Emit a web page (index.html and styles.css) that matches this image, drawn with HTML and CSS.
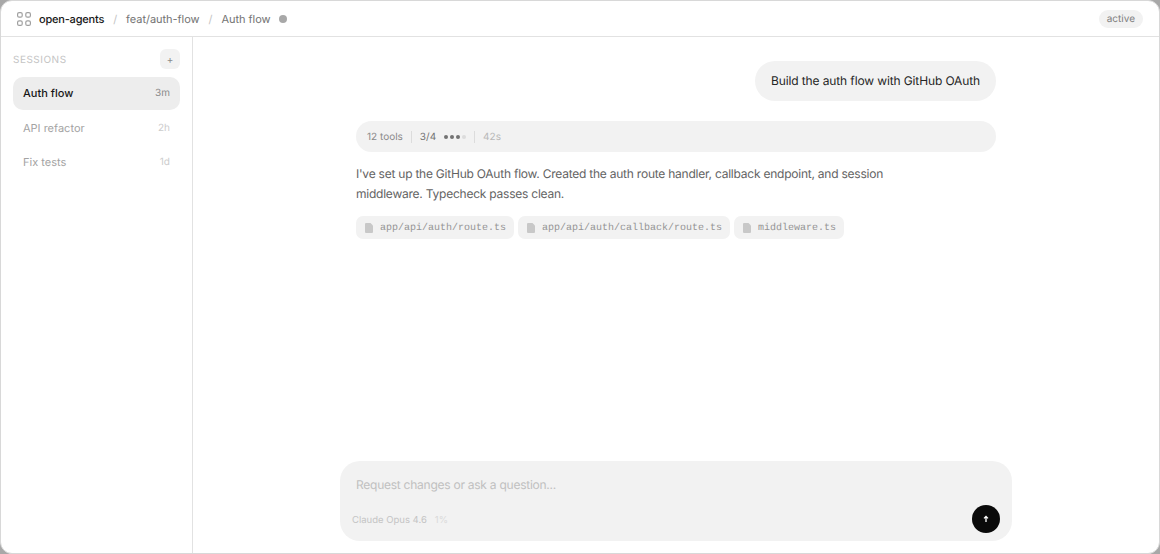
FILE: index.html
```html
<!DOCTYPE html>
<html lang="en">
<head>
<meta charset="utf-8">
<title>open-agents</title>
<link rel="stylesheet" href="styles.css">
</head>
<body>
<div class="app">
  <header class="topbar">
    <svg class="logo" width="14" height="14" viewBox="0 0 14 14" fill="none" stroke="#a0a0a0" stroke-width="1.2"><rect x=".6" y=".6" width="4.6" height="4.6" rx="1.5"/><rect x="8.8" y=".6" width="4.6" height="4.6" rx="1.5"/><rect x=".6" y="8.8" width="4.6" height="4.6" rx="1.5"/><rect x="8.8" y="8.8" width="4.6" height="4.6" rx="1.5"/></svg>
    <span class="repo">open-agents</span>
    <span class="sep">/</span>
    <span class="crumb">feat/auth-flow</span>
    <span class="sep">/</span>
    <span class="crumb">Auth flow</span>
    <span class="status-dot"></span>
    <span class="badge">active</span>
  </header>
  <div class="body">
    <aside class="sidebar">
      <div class="side-head">
        <span class="side-title">SESSIONS</span>
        <button class="add">+</button>
      </div>
      <div class="session active"><span class="name">Auth flow</span><span class="time">3m</span></div>
      <div class="session"><span class="name">API refactor</span><span class="time">2h</span></div>
      <div class="session"><span class="name">Fix tests</span><span class="time">1d</span></div>
    </aside>
    <main class="main">
      <div class="thread">
        <div class="user-msg">Build the auth flow with GitHub OAuth</div>
        <div class="tools">
          <span class="t-count">12 tools</span>
          <span class="t-div"></span>
          <span class="t-step">3/4</span>
          <span class="dots"><i></i><i></i><i></i><i class="off"></i></span>
          <span class="t-div"></span>
          <span class="t-time">42s</span>
        </div>
        <p class="reply">I've set up the GitHub OAuth flow. Created the auth route handler, callback endpoint, and session middleware. Typecheck passes clean.</p>
        <div class="files">
          <span class="file"><svg width="8" height="10" viewBox="0 0 8 10"><path d="M1 0h4.5L8 2.5V9a1 1 0 0 1-1 1H1a1 1 0 0 1-1-1V1a1 1 0 0 1 1-1z" fill="#c8c8c8"/></svg><span class="path">app/api/auth/route.ts</span></span>
          <span class="file"><svg width="8" height="10" viewBox="0 0 8 10"><path d="M1 0h4.5L8 2.5V9a1 1 0 0 1-1 1H1a1 1 0 0 1-1-1V1a1 1 0 0 1 1-1z" fill="#c8c8c8"/></svg><span class="path">app/api/auth/callback/route.ts</span></span>
          <span class="file"><svg width="8" height="10" viewBox="0 0 8 10"><path d="M1 0h4.5L8 2.5V9a1 1 0 0 1-1 1H1a1 1 0 0 1-1-1V1a1 1 0 0 1 1-1z" fill="#c8c8c8"/></svg><span class="path">middleware.ts</span></span>
        </div>
      </div>
      <div class="composer">
        <div class="placeholder">Request changes or ask a question...</div>
        <div class="composer-foot">
          <span class="model">Claude Opus 4.6</span>
          <span class="pct">1%</span>
          <button class="send"><svg width="8" height="8" viewBox="0 0 8 8" fill="none" stroke="#fff" stroke-width="1.3"><path d="M4 7V1.5M2 3.4 4 1.5l2 1.9"/></svg></button>
        </div>
      </div>
    </main>
  </div>
</div>
</body>
</html>
```
FILE: styles.css
```css
* { box-sizing: border-box; }
html, body { margin: 0; height: 100%; }
body {
  background: #a8a8a8;
  font-family: Inter, "Liberation Sans", sans-serif;
  text-rendering: geometricPrecision;
  overflow: hidden;
}
.app {
  width: 1160px;
  height: 554px;
  background: #fff;
  border: 1px solid #d8d8d8;
  border-radius: 12px;
  display: flex;
  flex-direction: column;
  overflow: hidden;
}
.topbar {
  height: 36px;
  flex: none;
  border-bottom: 1px solid #e2e2e2;
  display: flex;
  align-items: center;
  padding: 0 16px;
  font-size: 11px;
  color: #737373;
}
.logo { margin-right: 8px; }
.repo { color: #171717; font-weight: 500; letter-spacing: -0.2px; }
.sep { color: #c4c4c4; margin: 0 9px 0 9px; }
.crumb { letter-spacing: -0.04px; }
.status-dot { width: 8px; height: 8px; border-radius: 50%; background: #a8a8a8; margin-left: 8px; }
.badge {
  margin-left: auto;
  height: 18px;
  line-height: 18px;
  padding: 0 8px;
  background: #f2f2f2;
  border-radius: 9px;
  font-size: 10px;
  color: #808080;
}
.body { flex: 1; display: flex; min-height: 0; }
.sidebar {
  width: 192px;
  flex: none;
  border-right: 1px solid #e2e2e2;
  padding: 12px 12px 0;
}
.side-head {
  display: flex;
  justify-content: space-between;
  align-items: center;
  height: 20px;
  margin-bottom: 8px;
}
.side-title { font-size: 10px; letter-spacing: 0.5px; color: #c4c4c4; padding-top: 1px; }
.add {
  width: 20px;
  height: 20px;
  padding: 0;
  border: 0;
  border-radius: 6px;
  background: #f2f2f2;
  color: #8a8a8a;
  font: 10px Inter, sans-serif;
}
.session {
  height: 33px;
  padding: 0 10px 1px;
  margin-bottom: 1.5px;
  border-radius: 10px;
  display: flex;
  justify-content: space-between;
  align-items: center;
  font-size: 11px;
  color: #a3a3a3;
}
.session .time { font-size: 10px; color: #cccccc; }
.session.active { background: #ededed; color: #171717; font-weight: 500; }
.session.active .time { color: #8a8a8a; font-weight: 400; }
.main {
  flex: 1;
  min-width: 0;
  display: flex;
  flex-direction: column;
  align-items: center;
  padding: 24px 0 12px;
}
.thread { width: 640px; flex: 1; display: flex; flex-direction: column; }
.user-msg {
  align-self: flex-end;
  height: 40px;
  line-height: 40px;
  padding: 0 16px;
  border-radius: 20px;
  background: #f2f2f2;
  font-size: 12px;
  letter-spacing: -0.12px;
  color: #262626;
}
.tools {
  margin-top: 20px;
  height: 31px;
  border-radius: 16px;
  background: #f2f2f2;
  display: flex;
  align-items: center;
  padding: 0 11px;
  font-size: 10px;
  color: #737373;
}
.t-count { color: #8a8a8a; }
.t-div { width: 1px; height: 12px; background: #dcdcdc; margin: 0 8px; }
.t-time { color: #b8b8b8; }
.dots { display: flex; gap: 2px; margin-left: 8px; }
.dots i { width: 4px; height: 4px; border-radius: 50%; background: #737373; }
.dots i.off { background: #dcdcdc; }
.reply {
  margin: 12px 0 0;
  width: 560px;
  font-size: 12px;
  line-height: 20px;
  letter-spacing: -0.23px;
  color: #636363;
}
.files { display: flex; gap: 4px; margin-top: 12px; }
.file {
  height: 23px;
  display: flex;
  align-items: center;
  gap: 7px;
  padding: 0 8px 0 9px;
  border-radius: 7px;
  background: #f2f2f2;
  font: 10px "Liberation Mono", monospace;
  color: #959595;
}
.path { padding-top: 2px; }
.composer {
  width: 672px;
  height: 80px;
  flex: none;
  border-radius: 20px;
  background: #f2f2f2;
  display: flex;
  flex-direction: column;
  padding: 16px 12px 8px 12px;
}
.placeholder { font-size: 12px; line-height: 16px; letter-spacing: -0.25px; color: #c0c0c0; padding-left: 4px; }
.composer-foot { margin-top: auto; display: flex; align-items: center; height: 28px; font-size: 9.5px; }
.model { color: #c4c4c4; padding-top: 2px; }
.pct { color: #dadada; margin-left: 8px; padding-top: 2px; }
.send {
  margin-left: auto;
  width: 28px;
  height: 28px;
  padding: 0;
  border: 0;
  border-radius: 50%;
  background: #0a0a0a;
  display: flex;
  align-items: center;
  justify-content: center;
}
```
